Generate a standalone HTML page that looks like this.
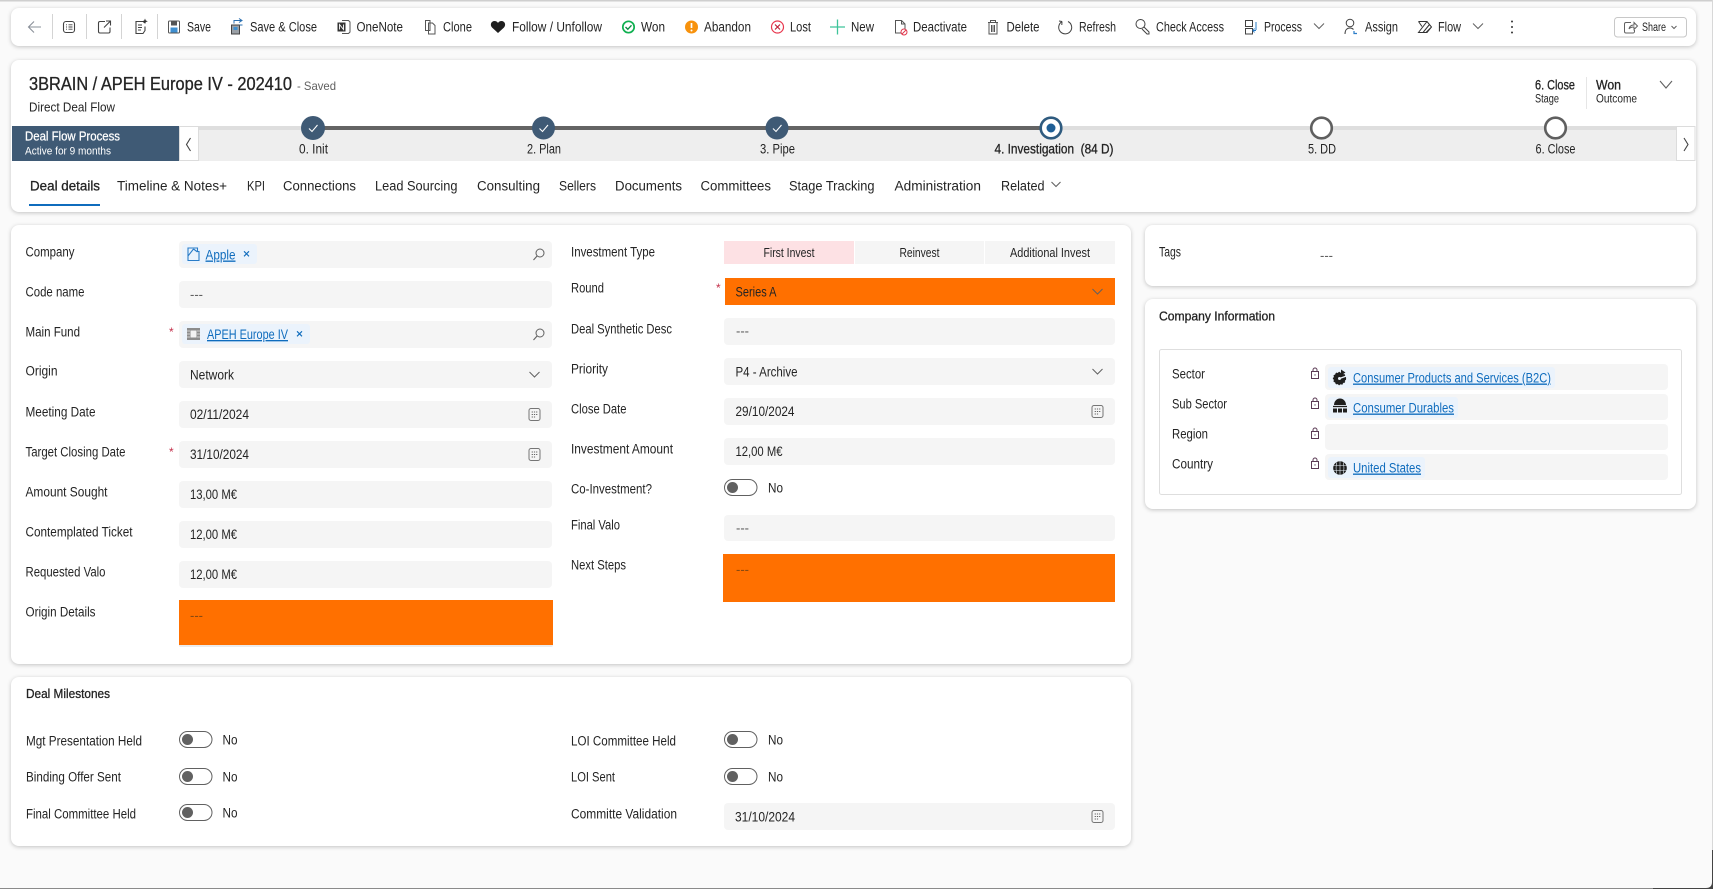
<!DOCTYPE html>
<html lang="en">
<head>
<meta charset="utf-8">
<title>3BRAIN / APEH Europe IV - 202410</title>
<style>
html,body{margin:0;padding:0;background:#fafafa;width:1713px;height:889px;overflow:hidden}
svg{display:block}
text{font-family:"Liberation Sans",sans-serif;font-size:13.5px;fill:#242424;white-space:pre}
.card{fill:#fff;filter:drop-shadow(0 1px 2px rgba(0,0,0,.22))}
.f{fill:#f5f5f5}
.m{fill:#616161}
.o{fill:#8a4a10}
.semi{stroke:#242424;stroke-width:.3}
.lk{fill:#0f6cbd;text-decoration:underline}
.chip{fill:#ebf3fc}
.ln{fill:none;stroke:#424242;stroke-width:1.1}
.ch{fill:none;stroke:#616161;stroke-width:1.1}
</style>
</head>
<body>
<svg xmlns="http://www.w3.org/2000/svg" width="1713" height="889" viewBox="0 0 1713 889">
<defs>
<g id="cal"><rect x="-5.500" y="-6" width="11" height="12" rx="2" fill="none" stroke="#757575" stroke-width="1"/><path d="M-2.800 -2.500h1.200M-.6 -2.500h1.200M1.600 -2.500h1.200M-2.800 0h1.200M-.6 0h1.200M1.600 0h1.200M-2.800 2.500h1.200M-.6 2.500h1.200" stroke="#616161" stroke-width="1.100"/></g>
<g id="srch"><circle cx="1.500" cy="-1.500" r="4" fill="none" stroke="#616161" stroke-width="1"/><path d="M-1.300 1.400L-5 5.500" stroke="#616161" stroke-width="1.100"/></g>
<path id="chv" d="M-5 -2.500L0 2.500L5 -2.500" fill="none" stroke="#616161" stroke-width="1"/>
<g id="tog"><rect x=".5" y=".5" width="32.500" height="16" rx="8" fill="#fff" stroke="#616161" stroke-width="1"/><circle cx="8.500" cy="8.500" r="5.500" fill="#616161"/></g>
<g id="lock"><rect x="-3.500" y="-2.500" width="7" height="7" fill="none" stroke="#5b3a54" stroke-width="1"/><path d="M-2 -2.500V-4a2 2 0 0 1 4 0V-2.500" fill="none" stroke="#5b3a54" stroke-width="1"/><path d="M0 .2v1.400" stroke="#5b3a54" stroke-width="1"/></g>
</defs>

<!-- page frame -->
<rect width="1713" height="889" fill="#fafafa"/>
<rect width="1713" height="1.500" fill="#cfcfcf"/>
<rect x="0" y="888" width="1653" height="1" fill="#8a8a8a"/>
<rect x="1653" y="888" width="60" height="1" fill="#444"/>
<rect x="1712" y="0" width="1" height="850" fill="#d8d8d8"/>
<path d="M1713 850V889H1700V888H1706Q1712 888 1712 882V850Z" fill="#444"/>

<!-- toolbar -->
<rect class="card" x="11" y="8" width="1685" height="38" rx="8"/>
<path d="M41 27H29M34 21.500L28.500 27L34 32.500" fill="none" stroke="#8a9099" stroke-width="1.100"/>
<path d="M52.500 14V39M86.500 14V39M121.500 14V39M157.500 14V39" stroke="#d4d4d4" stroke-width="1"/>
<rect x="63.500" y="21.500" width="11" height="11" rx="2.500" class="ln"/><path d="M66 24.800h1M68.500 24.800h4M66 27h1M68.500 27h4M66 29.200h1M68.500 29.200h4" stroke="#424242" stroke-width=".9"/>
<path d="M105 21.500h-5a1.500 1.500 0 0 0-1.500 1.500v8.500a1.500 1.500 0 0 0 1.500 1.500h8.500a1.500 1.500 0 0 0 1.500-1.500v-4M104 27.500l6-6M106 21h4.500v4.500" class="ln"/>
<path d="M144 23v-1.500h-8v12h7l2-3v-4M138 25h4M138 27.500h4M138 30h3" class="ln"/><path d="M145 18.500l.8 2 2 .8-2 .8-.8 2-.8-2-2-.8 2-.8z" fill="#333"/>
<rect x="168.500" y="21" width="11" height="12" rx="1" fill="#fff" stroke="#555"/><rect x="171" y="21.500" width="6" height="4" fill="#555"/><rect x="170.500" y="27.500" width="7" height="5" fill="#3f8fd0"/>
<text x="187" y="31.500" textLength="24" lengthAdjust="spacingAndGlyphs">Save</text>
<rect x="231.500" y="25" width="8" height="9" fill="#9aa0a6" stroke="#444"/><rect x="233.500" y="27" width="4" height="3" fill="#3f8fd0"/><path d="M234 23.500v-3h8M239 18.500l3 2-3 2M242.500 25h-3" fill="none" stroke="#2a6fb0" stroke-width="1"/>
<text x="250" y="31.500" textLength="67" lengthAdjust="spacingAndGlyphs">Save &amp; Close</text>
<path d="M342 20.500h6.500l1.500 1.500v10l-1.500 1.500h-6.500" fill="none" stroke="#555"/><rect x="337.500" y="22.500" width="8" height="9" fill="#333"/><path d="M339.500 29.500v-5l4 5v-5" stroke="#fff" fill="none" stroke-width=".9"/>
<text x="356.500" y="31.500" textLength="46.500" lengthAdjust="spacingAndGlyphs">OneNote</text>
<path d="M425.500 20.500h4.500v10h-4.500zM428.500 23h4l2.500 2.500v8.500h-6.500z" fill="#fff" stroke="#555"/>
<text x="443" y="31.500" textLength="29" lengthAdjust="spacingAndGlyphs">Clone</text>
<path d="M498 33l-6-5.500c-2.500-3-.5-6.500 2.500-6.500 1.500 0 2.800.8 3.500 2 .7-1.200 2-2 3.500-2 3 0 5 3.500 2.500 6.500z" fill="#1f1f1f"/>
<text x="512" y="31.500" textLength="90" lengthAdjust="spacingAndGlyphs">Follow / Unfollow</text>
<circle cx="628.500" cy="27" r="5.700" fill="#fff" stroke="#0fb050" stroke-width="1.700"/><path d="M625.500 27l2.300 2.300 3.700-4" fill="none" stroke="#0b8a40" stroke-width="1.400"/>
<text x="641" y="31.500" textLength="24" lengthAdjust="spacingAndGlyphs">Won</text>
<circle cx="691.500" cy="27" r="6.500" fill="#f7920d"/><path d="M691.500 23v5" stroke="#fff" stroke-width="1.700"/><circle cx="691.500" cy="30.500" r="1" fill="#fff"/>
<text x="704" y="31.500" textLength="47" lengthAdjust="spacingAndGlyphs">Abandon</text>
<circle cx="777.500" cy="27" r="6" fill="#fff" stroke="#e8384f" stroke-width="1.200"/><path d="M775 24.500l5 5M780 24.500l-5 5" stroke="#c02038" stroke-width="1.200"/>
<text x="790" y="31.500" textLength="21" lengthAdjust="spacingAndGlyphs">Lost</text>
<path d="M837.500 19.500v15M830 27h15" stroke="#3fc49a" stroke-width="1.300"/>
<text x="851" y="31.500" textLength="23" lengthAdjust="spacingAndGlyphs">New</text>
<path d="M895.500 20.500h6l3.500 3.500v9h-9.500zM901.500 20.500v3.500h3.500" fill="#fff" stroke="#555"/><circle cx="904" cy="32" r="3" fill="#fff" stroke="#e0364c"/><path d="M902 34l4-4" stroke="#e0364c"/>
<text x="913" y="31.500" textLength="54" lengthAdjust="spacingAndGlyphs">Deactivate</text>
<path d="M988 22.500h10M990.500 22.500v-2h5v2M989 22.500v11.500h8v-11.500M991.500 25v7M993 25v7M994.500 25v7" fill="none" stroke="#555"/>
<text x="1006.500" y="31.500" textLength="33" lengthAdjust="spacingAndGlyphs">Delete</text>
<path d="M1068 21.500a6.500 6.500 0 1 1-6 .2M1062 21.500l-.2 3.500M1062 21.500l-3-.5" fill="none" stroke="#424242" stroke-width="1"/>
<text x="1079" y="31.500" textLength="37" lengthAdjust="spacingAndGlyphs">Refresh</text>
<circle cx="1140.500" cy="24" r="4.500" fill="none" stroke="#424242"/><path d="M1144 27l5 5v2h-2l-5-5" fill="none" stroke="#424242"/>
<text x="1156" y="31.500" textLength="68" lengthAdjust="spacingAndGlyphs">Check Access</text>
<path d="M1245.500 20.500h7v6h-7zM1245.500 28.500h7v5.500h-7z" fill="none" stroke="#424242"/><path d="M1256 22v8M1256 30.500h-2.500M1254.500 28.500l-1.500 2 1.500 2" fill="none" stroke="#2a7cc7"/>
<text x="1264" y="31.500" textLength="38" lengthAdjust="spacingAndGlyphs">Process</text>
<use href="#chv" x="1319" y="26"/>
<circle cx="1350" cy="23" r="3.800" fill="none" stroke="#424242"/><path d="M1345 34c0-4 2-6 5-6 1.500 0 2.500.4 3.500 1.500" fill="none" stroke="#424242"/><path d="M1354 31v2.500h3" fill="none" stroke="#2a7cc7" stroke-width="1.200"/>
<text x="1365" y="31.500" textLength="33" lengthAdjust="spacingAndGlyphs">Assign</text>
<path d="M1418.500 21.500h8.500l4.500 5.500-4.500 5.500h-8.500l8.500-11M1418.500 21.500l3.500 5M1431.500 27l-5.500 5.500M1423 32.500l6.500-8" fill="none" stroke="#333"/>
<text x="1438" y="31.500" textLength="23" lengthAdjust="spacingAndGlyphs">Flow</text>
<use href="#chv" x="1478" y="26"/>
<circle cx="1512" cy="21.500" r="1" fill="#333"/><circle cx="1512" cy="27" r="1" fill="#333"/><circle cx="1512" cy="32.500" r="1" fill="#333"/>
<rect x="1614.500" y="17.500" width="72" height="19.500" rx="3" fill="#fff" stroke="#c8c8c8"/>
<path d="M1631 22.500h-5a1.500 1.500 0 0 0-1.500 1.500v7.500a1.500 1.500 0 0 0 1.500 1.500h7a1.500 1.500 0 0 0 1.500-1.500v-1.500M1629 29c.5-3 2.500-4 5-4v-2.500l3.500 3.500-3.500 3.500v-2.500c-2 0-4 .5-5 2z" fill="none" stroke="#616161"/>
<text x="1642" y="31" textLength="24" lengthAdjust="spacingAndGlyphs" style="font-size:11.500px">Share</text>
<path d="M1671.500 26l2.500 2.500 2.500-2.500" fill="none" stroke="#616161"/>

<!-- header card -->
<rect class="card" x="11" y="60" width="1685" height="152" rx="8"/>
<text x="29" y="90.200" textLength="263" lengthAdjust="spacingAndGlyphs" class="semi" style="font-size:18px">3BRAIN / APEH Europe IV - 202410</text>
<text x="297" y="90" textLength="39" lengthAdjust="spacingAndGlyphs" class="m" style="font-size:12px">- Saved</text>
<text x="29" y="111.500" textLength="86" lengthAdjust="spacingAndGlyphs" style="font-size:12.500px">Direct Deal Flow</text>
<text x="1535" y="89.500" textLength="40" lengthAdjust="spacingAndGlyphs" class="semi">6. Close</text>
<text x="1535" y="102.500" textLength="24" lengthAdjust="spacingAndGlyphs" style="font-size:11.500px">Stage</text>
<rect x="1586" y="77" width="1" height="32" fill="#e6e6e6"/>
<text x="1596" y="89.500" textLength="25" lengthAdjust="spacingAndGlyphs" class="semi">Won</text>
<text x="1596" y="102.500" textLength="41" lengthAdjust="spacingAndGlyphs" style="font-size:11.500px">Outcome</text>
<path d="M1660 81l6 7 6-7" class="ch"/>

<!-- process bar -->
<rect x="12" y="126" width="1683" height="35" fill="#eeeeee"/>
<rect x="12" y="126" width="1683" height="4" fill="#dedede"/>
<rect x="313" y="126" width="738" height="4" fill="#646464"/>
<rect x="12" y="126" width="167" height="35" fill="#3f5a75"/>
<text x="25" y="140.500" textLength="95" lengthAdjust="spacingAndGlyphs" style="fill:#fff;stroke:#fff;stroke-width:.25;font-size:12.500px">Deal Flow Process</text>
<text x="25" y="154.500" textLength="86" lengthAdjust="spacingAndGlyphs" style="fill:#fff;font-size:11px">Active for 9 months</text>
<rect x="179.500" y="126.500" width="19" height="34" fill="#fff" stroke="#dcdcdc"/>
<path d="M190.500 138l-4 6.500 4 6.500" class="ln"/>
<rect x="1676.500" y="126.500" width="18.500" height="34" fill="#fff" stroke="#dcdcdc"/>
<path d="M1684 138l4 6.500-4 6.500" class="ln"/>
<g fill="#3f5a75"><circle cx="313" cy="128" r="12"/><circle cx="543.500" cy="128" r="11.500"/><circle cx="777" cy="128" r="11.500"/></g>
<g fill="none" stroke="#fff" stroke-width="1.100"><path d="M309 128.500l3 3 5.500-6.500"/><path d="M539.500 128.500l3 3 5.500-6.500"/><path d="M773 128.500l3 3 5.500-6.500"/></g>
<circle cx="1051" cy="128" r="10.300" fill="#fff" stroke="#2f5b7f" stroke-width="2.600"/><circle cx="1051" cy="128" r="4.500" fill="#1f5f96"/>
<circle cx="1321.500" cy="128" r="10.300" fill="#fff" stroke="#5f5f5f" stroke-width="2.600"/>
<circle cx="1555.500" cy="128" r="10.300" fill="#fff" stroke="#5f5f5f" stroke-width="2.600"/>
<text x="299" y="153.500" textLength="29" lengthAdjust="spacingAndGlyphs">0. Init</text>
<text x="527" y="153.500" textLength="34" lengthAdjust="spacingAndGlyphs">2. Plan</text>
<text x="760" y="153.500" textLength="35" lengthAdjust="spacingAndGlyphs">3. Pipe</text>
<text x="994.500" y="153.500" textLength="119" lengthAdjust="spacingAndGlyphs" class="semi">4. Investigation  (84 D)</text>
<text x="1308" y="153.500" textLength="28" lengthAdjust="spacingAndGlyphs">5. DD</text>
<text x="1535.500" y="153.500" textLength="40" lengthAdjust="spacingAndGlyphs">6. Close</text>

<!-- tabs -->
<text x="30" y="190.500" textLength="70" lengthAdjust="spacingAndGlyphs" class="semi">Deal details</text>
<rect x="29" y="204" width="71" height="2" fill="#0f6cbd"/>
<text x="117" y="190.500" textLength="110" lengthAdjust="spacingAndGlyphs">Timeline &amp; Notes+</text>
<text x="247" y="190.500" textLength="18" lengthAdjust="spacingAndGlyphs">KPI</text>
<text x="283" y="190.500" textLength="73" lengthAdjust="spacingAndGlyphs">Connections</text>
<text x="375" y="190.500" textLength="82.500" lengthAdjust="spacingAndGlyphs">Lead Sourcing</text>
<text x="477" y="190.500" textLength="63" lengthAdjust="spacingAndGlyphs">Consulting</text>
<text x="559" y="190.500" textLength="37" lengthAdjust="spacingAndGlyphs">Sellers</text>
<text x="615" y="190.500" textLength="67" lengthAdjust="spacingAndGlyphs">Documents</text>
<text x="700.500" y="190.500" textLength="70.500" lengthAdjust="spacingAndGlyphs">Committees</text>
<text x="789" y="190.500" textLength="85.500" lengthAdjust="spacingAndGlyphs">Stage Tracking</text>
<text x="894.500" y="190.500" textLength="86.500" lengthAdjust="spacingAndGlyphs">Administration</text>
<text x="1001" y="190.500" textLength="43.500" lengthAdjust="spacingAndGlyphs">Related</text>
<path d="M1051.500 182l4.500 4.500 4.500-4.500" class="ch"/>

<!-- main form card -->
<rect class="card" x="11" y="225" width="1120" height="439" rx="8"/>
<g class="f">
<rect x="179" y="241" width="373" height="27" rx="4"/>
<rect x="179" y="281" width="373" height="27" rx="4"/>
<rect x="179" y="321" width="373" height="27" rx="4"/>
<rect x="179" y="361" width="373" height="27" rx="4"/>
<rect x="179" y="401" width="373" height="27" rx="4"/>
<rect x="179" y="441" width="373" height="27" rx="4"/>
<rect x="179" y="481" width="373" height="27" rx="4"/>
<rect x="179" y="521" width="373" height="27" rx="4"/>
<rect x="179" y="561" width="373" height="27" rx="4"/>
</g>
<rect x="179" y="640" width="374" height="7" rx="2" fill="#ececec"/>
<rect x="179" y="600" width="374" height="45" fill="#ff7000"/>
<text x="25.500" y="256.500" textLength="49" lengthAdjust="spacingAndGlyphs">Company</text>
<text x="25.500" y="296.500" textLength="59" lengthAdjust="spacingAndGlyphs">Code name</text>
<text x="25.500" y="336.500" textLength="54.500" lengthAdjust="spacingAndGlyphs">Main Fund</text>
<text x="25.500" y="375.500" textLength="32" lengthAdjust="spacingAndGlyphs">Origin</text>
<text x="25.500" y="416.500" textLength="70" lengthAdjust="spacingAndGlyphs">Meeting Date</text>
<text x="25.500" y="456.500" textLength="100" lengthAdjust="spacingAndGlyphs">Target Closing Date</text>
<text x="25.500" y="496.500" textLength="82" lengthAdjust="spacingAndGlyphs">Amount Sought</text>
<text x="25.500" y="536.500" textLength="107" lengthAdjust="spacingAndGlyphs">Contemplated Ticket</text>
<text x="25.500" y="576.500" textLength="80" lengthAdjust="spacingAndGlyphs">Requested Valo</text>
<text x="25.500" y="616.500" textLength="70" lengthAdjust="spacingAndGlyphs">Origin Details</text>
<text x="169" y="336" style="fill:#c4314b;font-size:12px">*</text>
<text x="169" y="456" style="fill:#c4314b;font-size:12px">*</text>

<rect class="chip" x="182" y="244" width="75" height="20" rx="3"/>
<path d="M188 249v-1h9.500v3.500h1.500v9h-11zM188 256l5.500-7M193.500 249l4 3" fill="none" stroke="#2a7cc7" stroke-width="1.100"/>
<text x="205.500" y="259.500" textLength="30" lengthAdjust="spacingAndGlyphs" class="lk">Apple</text>
<path d="M244 251.300l5 5M249 251.300l-5 5" stroke="#0f6cbd" stroke-width="1.100"/>
<use href="#srch" x="538.500" y="254.500"/>
<text x="190" y="299" textLength="13" lengthAdjust="spacingAndGlyphs" class="m">---</text>
<rect class="chip" x="182" y="324" width="128" height="20" rx="3"/>
<rect x="187" y="328" width="13" height="12" fill="#8c8c8c"/><rect x="190.500" y="330.500" width="6" height="7" fill="#f2f2f2"/><path d="M187 331h3M187 334h3M187 337h3M197 331h3M197 334h3M197 337h3" stroke="#e6e6e6" stroke-width=".8"/>
<text x="207" y="339" textLength="81" lengthAdjust="spacingAndGlyphs" class="lk">APEH Europe IV</text>
<path d="M297 331.300l5 5M302 331.300l-5 5" stroke="#0f6cbd" stroke-width="1.100"/>
<use href="#srch" x="538.500" y="334.500"/>
<text x="190" y="379.500" textLength="44" lengthAdjust="spacingAndGlyphs">Network</text>
<use href="#chv" x="534.500" y="374.500"/>
<text x="190" y="419" textLength="59" lengthAdjust="spacingAndGlyphs">02/11/2024</text>
<use href="#cal" x="534.500" y="414.500"/>
<text x="190" y="459" textLength="59" lengthAdjust="spacingAndGlyphs">31/10/2024</text>
<use href="#cal" x="534.500" y="454.500"/>
<text x="190" y="499" textLength="47" lengthAdjust="spacingAndGlyphs">13,00 M€</text>
<text x="190" y="539" textLength="47" lengthAdjust="spacingAndGlyphs">12,00 M€</text>
<text x="190" y="579" textLength="47" lengthAdjust="spacingAndGlyphs">12,00 M€</text>
<text x="190" y="620" textLength="13" lengthAdjust="spacingAndGlyphs" class="o">---</text>

<!-- middle column -->
<text x="571" y="256.500" textLength="84" lengthAdjust="spacingAndGlyphs">Investment Type</text>
<text x="571" y="292.500" textLength="33" lengthAdjust="spacingAndGlyphs">Round</text>
<text x="571" y="333.500" textLength="101" lengthAdjust="spacingAndGlyphs">Deal Synthetic Desc</text>
<text x="571" y="373.500" textLength="37" lengthAdjust="spacingAndGlyphs">Priority</text>
<text x="571" y="413.500" textLength="55.500" lengthAdjust="spacingAndGlyphs">Close Date</text>
<text x="571" y="453.500" textLength="102" lengthAdjust="spacingAndGlyphs">Investment Amount</text>
<text x="571" y="493.500" textLength="81" lengthAdjust="spacingAndGlyphs">Co-Investment?</text>
<text x="571" y="529.500" textLength="49" lengthAdjust="spacingAndGlyphs">Final Valo</text>
<text x="571" y="569.500" textLength="55" lengthAdjust="spacingAndGlyphs">Next Steps</text>
<text x="716" y="292" style="fill:#c4314b;font-size:12px">*</text>
<rect x="724" y="241" width="130" height="23" fill="#fde1e4"/>
<rect class="f" x="855" y="241" width="129" height="23"/>
<rect class="f" x="985" y="241" width="130" height="23"/>
<text x="763.500" y="257" textLength="51" lengthAdjust="spacingAndGlyphs" style="font-size:12.500px">First Invest</text>
<text x="899.500" y="257" textLength="40" lengthAdjust="spacingAndGlyphs" style="font-size:12.500px">Reinvest</text>
<text x="1010" y="257" textLength="80" lengthAdjust="spacingAndGlyphs" style="font-size:12.500px">Additional Invest</text>
<rect x="725" y="278" width="390" height="27" fill="#ff7000"/>
<text x="735.500" y="296.500" textLength="41" lengthAdjust="spacingAndGlyphs">Series A</text>
<use href="#chv" x="1097.500" y="291.500"/>
<g class="f">
<rect x="724" y="318" width="391" height="27" rx="4"/>
<rect x="724" y="358" width="391" height="27" rx="4"/>
<rect x="724" y="398" width="391" height="27" rx="4"/>
<rect x="724" y="438" width="391" height="27" rx="4"/>
<rect x="724" y="515" width="391" height="26" rx="4"/>
</g>
<text x="736" y="335.500" textLength="13" lengthAdjust="spacingAndGlyphs" class="m">---</text>
<text x="735.500" y="376.500" textLength="62" lengthAdjust="spacingAndGlyphs">P4 - Archive</text>
<use href="#chv" x="1097.500" y="371.500"/>
<text x="735.500" y="416" textLength="59" lengthAdjust="spacingAndGlyphs">29/10/2024</text>
<use href="#cal" x="1097.500" y="411.500"/>
<text x="735.500" y="456" textLength="47" lengthAdjust="spacingAndGlyphs">12,00 M€</text>
<use href="#tog" x="724" y="479"/>
<text x="768" y="492.500" textLength="15" lengthAdjust="spacingAndGlyphs">No</text>
<text x="736" y="532.500" textLength="13" lengthAdjust="spacingAndGlyphs" class="m">---</text>
<rect x="723" y="554" width="392" height="48" fill="#ff7000"/>
<text x="736" y="574" textLength="13" lengthAdjust="spacingAndGlyphs" class="o">---</text>

<!-- tags card -->
<rect class="card" x="1145" y="225" width="551" height="61" rx="8"/>
<text x="1159" y="256.500" textLength="22" lengthAdjust="spacingAndGlyphs">Tags</text>
<text x="1320" y="260" textLength="13" lengthAdjust="spacingAndGlyphs" class="m">---</text>

<!-- company info card -->
<rect class="card" x="1145" y="299" width="551" height="210" rx="8"/>
<text x="1159" y="320.500" textLength="116" lengthAdjust="spacingAndGlyphs" class="semi" style="font-size:13px">Company Information</text>
<rect x="1159.500" y="349.500" width="522" height="145" rx="2" fill="#fff" stroke="#dedede"/>
<text x="1172" y="378.500" textLength="33" lengthAdjust="spacingAndGlyphs">Sector</text>
<text x="1172" y="408.500" textLength="55" lengthAdjust="spacingAndGlyphs">Sub Sector</text>
<text x="1172" y="438.500" textLength="36" lengthAdjust="spacingAndGlyphs">Region</text>
<text x="1172" y="468.500" textLength="41" lengthAdjust="spacingAndGlyphs">Country</text>
<use href="#lock" x="1315" y="374"/>
<use href="#lock" x="1315" y="404"/>
<use href="#lock" x="1315" y="434"/>
<use href="#lock" x="1315" y="464"/>
<g class="f">
<rect x="1325" y="364" width="343" height="26" rx="4"/>
<rect x="1325" y="394" width="343" height="26" rx="4"/>
<rect x="1325" y="424" width="343" height="26" rx="4"/>
<rect x="1325" y="454" width="343" height="26" rx="4"/>
</g>
<rect class="chip" x="1328" y="367" width="227" height="21" rx="3"/>
<rect class="chip" x="1328" y="397" width="130" height="21" rx="3"/>
<rect class="chip" x="1328" y="457" width="97" height="21" rx="3"/>
<circle cx="1339.500" cy="378.500" r="6" fill="#1f1f1f" stroke="#1f1f1f" stroke-width="1.200" stroke-dasharray="1.500 1.500"/><path d="M1341 369.500l4.500 3-4.500 3z" fill="#1f1f1f"/><path d="M1339.500 378.500l7-2.500" stroke="#ebf3fc" stroke-width="1.300" fill="none"/><circle cx="1339.500" cy="378.500" r="1.500" fill="#ebf3fc"/>
<path d="M1334 405c0-3.500 2.500-6.500 6-6.500s6 3 6 6.500z" fill="#1f1f1f"/><path d="M1333 406.500h14" stroke="#1f1f1f" stroke-width="1.300"/><rect x="1333" y="408.500" width="4" height="4" fill="#1f1f1f"/><rect x="1338" y="408.500" width="4" height="4" fill="#1f1f1f"/><rect x="1343" y="408.500" width="4" height="4" fill="#1f1f1f"/>
<circle cx="1340" cy="468" r="6.800" fill="#1f1f1f"/><path d="M1333.500 465.500h13M1333.500 470.500h13M1340 461v14M1336.800 462.500q-1.500 5.500 0 11M1343.200 462.500q1.500 5.500 0 11" stroke="#ebf3fc" stroke-width=".6" fill="none"/>
<text x="1353" y="382.500" textLength="198" lengthAdjust="spacingAndGlyphs" class="lk">Consumer Products and Services (B2C)</text>
<text x="1353" y="412.500" textLength="101" lengthAdjust="spacingAndGlyphs" class="lk">Consumer Durables</text>
<text x="1353" y="472.500" textLength="68" lengthAdjust="spacingAndGlyphs" class="lk">United States</text>

<!-- milestones card -->
<rect class="card" x="11" y="677" width="1120" height="169" rx="8"/>
<text x="26" y="698" textLength="84" lengthAdjust="spacingAndGlyphs" class="semi" style="font-size:13px">Deal Milestones</text>
<text x="26" y="745.500" textLength="116" lengthAdjust="spacingAndGlyphs">Mgt Presentation Held</text>
<text x="26" y="781.500" textLength="95" lengthAdjust="spacingAndGlyphs">Binding Offer Sent</text>
<text x="26" y="818.500" textLength="110" lengthAdjust="spacingAndGlyphs">Final Committee Held</text>
<use href="#tog" x="179" y="731"/>
<use href="#tog" x="179" y="768"/>
<use href="#tog" x="179" y="804"/>
<text x="222.500" y="744.500" textLength="15" lengthAdjust="spacingAndGlyphs">No</text>
<text x="222.500" y="781.500" textLength="15" lengthAdjust="spacingAndGlyphs">No</text>
<text x="222.500" y="817.500" textLength="15" lengthAdjust="spacingAndGlyphs">No</text>
<text x="571" y="745.500" textLength="105" lengthAdjust="spacingAndGlyphs">LOI Committee Held</text>
<text x="571" y="781.500" textLength="44" lengthAdjust="spacingAndGlyphs">LOI Sent</text>
<text x="571" y="818.500" textLength="106" lengthAdjust="spacingAndGlyphs">Committe Validation</text>
<use href="#tog" x="724" y="731"/>
<use href="#tog" x="724" y="768"/>
<text x="768" y="744.500" textLength="15" lengthAdjust="spacingAndGlyphs">No</text>
<text x="768" y="781.500" textLength="15" lengthAdjust="spacingAndGlyphs">No</text>
<rect class="f" x="724" y="803" width="391" height="27" rx="4"/>
<text x="735" y="821.500" textLength="60" lengthAdjust="spacingAndGlyphs">31/10/2024</text>
<use href="#cal" x="1097.500" y="816.500"/>
</svg>
</body>
</html>
